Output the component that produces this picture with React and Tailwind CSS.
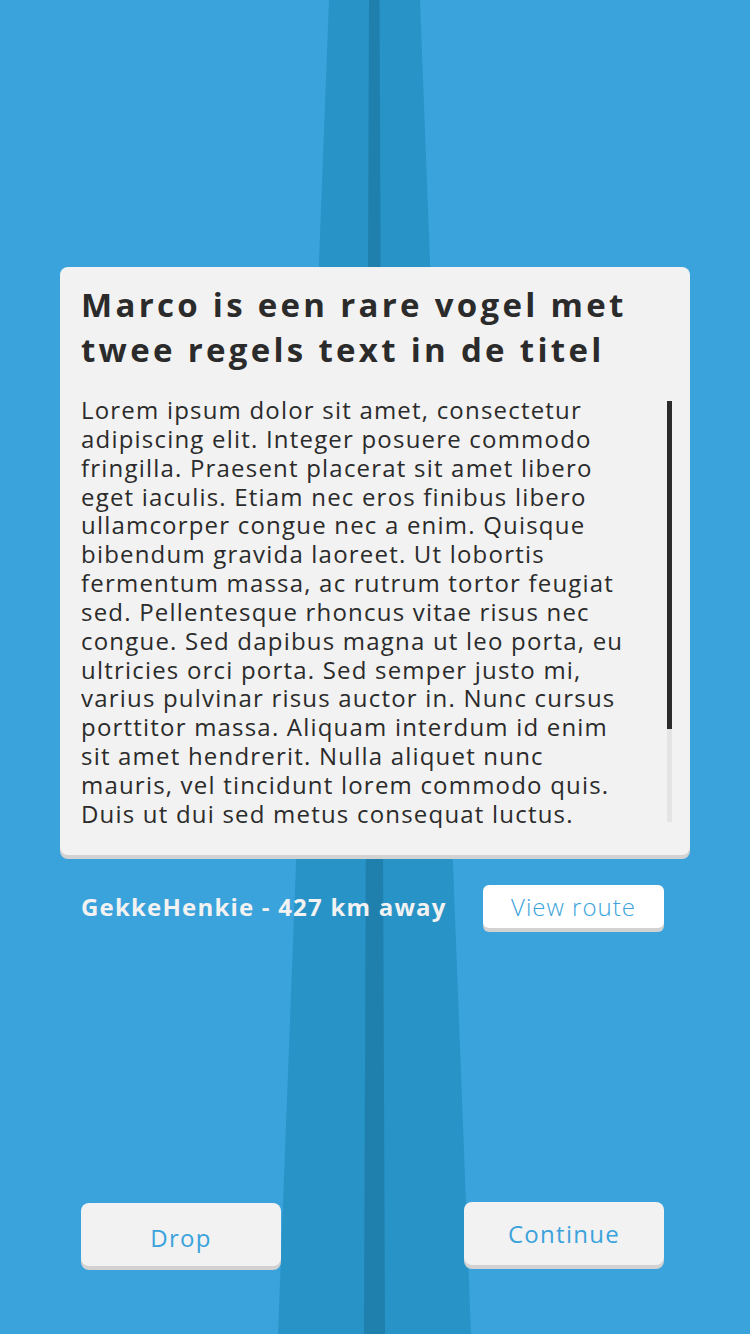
import React from "react";

const body =
  "Lorem ipsum dolor sit amet, consectetur adipiscing elit. Integer posuere commodo fringilla. Praesent placerat sit amet libero eget iaculis. Etiam nec eros finibus libero ullamcorper congue nec a enim. Quisque bibendum gravida laoreet. Ut lobortis fermentum massa, ac rutrum tortor feugiat sed. Pellentesque rhoncus vitae risus nec congue. Sed dapibus magna ut leo porta, eu ultricies orci porta. Sed semper justo mi, varius pulvinar risus auctor in. Nunc cursus porttitor massa. Aliquam interdum id enim sit amet hendrerit. Nulla aliquet nunc mauris, vel tincidunt lorem commodo quis. Duis ut dui sed metus consequat luctus. Vivamus vehicula lectus at nisl tempor, non dignissim magna cursus. Morbi et justo eu lorem posuere feugiat.";

function Road() {
  return (
    <svg className="absolute inset-0" width="750" height="1334" viewBox="0 0 750 1334">
      <polygon points="329,0 420,0 471,1334 278,1334" fill="#2893c7" />
      <polygon points="369,0 379.5,0 385,1334 364,1334" fill="#1f80ad" />
    </svg>
  );
}

export default function App() {
  return (
    <div
      className="relative w-[750px] h-[1334px] overflow-hidden bg-[#3ba3dc]"
      style={{ fontFamily: '"Open Sans", "Noto Sans", sans-serif' }}
    >
      <Road />
      <div className="relative flex flex-col h-full">
        <div className="mt-[267px] mx-[60px] rounded-[8px] bg-[#f2f2f2] shadow-[0_4px_0_#d2d2d2] pt-[15px] pb-[27px]">
          <h1 className="pl-[21px] pr-[4px] text-[33px] leading-[45px] font-bold tracking-[3.3px] text-[#2b2b2b]">
            Marco is een rare vogel met twee regels text in de titel
          </h1>
          <div className="mt-[24px] flex pl-[21px]">
            <div className="w-[549px] h-[432px] overflow-hidden text-[24px] leading-[28.85px] tracking-[1.2px] text-[#2b2b2b]">
              {body}
            </div>
            <div className="ml-[37px] mt-[5px] w-[5px] h-[421px] bg-[#e4e4e4] flex flex-col">
              <div className="h-[328px] bg-[#2b2b2b]" />
            </div>
          </div>
        </div>

        <div className="mt-[30px] flex items-center justify-between pl-[81px] pr-[86px]">
          <span className="text-[24px] leading-[32px] font-bold tracking-[1.2px] text-[#f2f2f2]">
            GekkeHenkie - 427 km away
          </span>
          <button className="w-[181px] h-[43px] rounded-[6px] bg-white shadow-[0_4px_0_#d2d2d2] text-[24px] font-light tracking-[1px] text-[#3ba3dc]">
            View route
          </button>
        </div>

        <div className="mt-auto mb-[68px] flex items-start justify-between pl-[81px] pr-[86px]">
          <button className="mt-[1px] w-[200px] h-[63px] rounded-[8px] bg-[#f2f2f2] shadow-[0_4px_0_#d2d2d2] pt-[6px] text-[24px] tracking-[1.3px] text-[#3ba3dc]">
            Drop
          </button>
          <button className="w-[200px] h-[63px] rounded-[8px] bg-[#f2f2f2] shadow-[0_4px_0_#d2d2d2] text-[24px] tracking-[1.3px] text-[#3ba3dc]">
            Continue
          </button>
        </div>
      </div>
    </div>
  );
}
